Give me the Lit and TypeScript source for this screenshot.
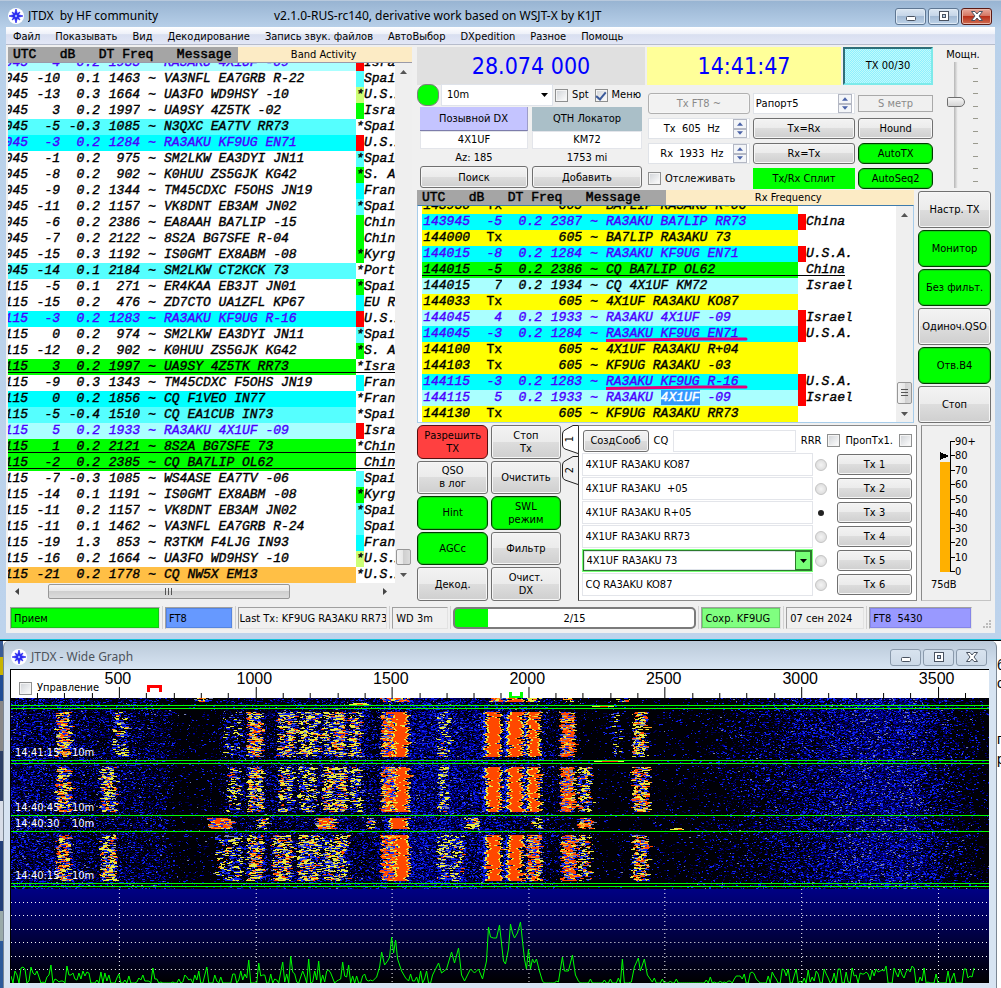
import { LitElement, html, svg, css } from "lit";
import { customElement } from "lit/decorators.js";
import { classMap } from "lit/directives/class-map.js";
import { styleMap } from "lit/directives/style-map.js";

/* time, dB, DT, freq, message, row colour, flag colour, star, country */
type Decode = [string, string, string, string, string, string, string, string, string];

const BAND: Decode[] = [
  ["140045", "4", "0.2", "1933", "RA3AKU 4X1UF -09", "pale mine", "red", "", "Israel"],
  ["140045", "-10", "0.1", "1463", "VA3NFL EA7GRB R-22", "", "sky", "", "Spain"],
  ["140045", "-13", "0.3", "1664", "UA3FO WD9HSY -10", "", "lime", "*", "U.S.A."],
  ["140045", "3", "0.2", "1997", "UA9SY 4Z5TK -02", "", "green", "", "Israel"],
  ["140045", "-5", "-0.3", "1085", "N3QXC EA7TV RR73", "sky", "", "*", "Spain"],
  ["140045", "-3", "0.2", "1284", "RA3AKU KF9UG EN71", "cyan mine", "red", "", "U.S.A."],
  ["140045", "-1", "0.2", "975", "SM2LKW EA3DYI JN11", "", "sky", "*", "Spain"],
  ["140045", "-8", "0.2", "902", "K0HUU ZS5GJK KG42", "", "green", "*", "S. Africa"],
  ["140045", "-9", "0.2", "1344", "TM45CDXC F5OHS JN19", "", "cyan", "", "France"],
  ["140045", "-11", "0.2", "1157", "VK8DNT EB3AM JN02", "", "sky", "*", "Spain"],
  ["140045", "-6", "0.2", "2386", "EA8AAH BA7LIP -15", "", "green", "", "China"],
  ["140045", "-7", "0.2", "2122", "8S2A BG7SFE R-04", "", "green", "", "China"],
  ["140045", "-15", "0.3", "1192", "IS0GMT EX8ABM -08", "", "green", "*", "Kyrgyz"],
  ["140045", "-14", "0.1", "2184", "SM2LKW CT2KCK 73", "sky", "", "*", "Portugal"],
  ["144115", "-5", "0.1", "271", "ER4KAA EB3JT JN01", "", "green", "*", "Spain"],
  ["144115", "-15", "0.2", "476", "ZD7CTO UA1ZFL KP67", "", "cyan", "", "EU Russia"],
  ["144115", "-3", "0.2", "1283", "RA3AKU KF9UG R-16", "cyan mine", "red", "", "U.S.A."],
  ["144115", "0", "0.2", "974", "SM2LKW EA3DYI JN11", "", "sky", "*", "Spain"],
  ["144115", "-12", "0.2", "902", "K0HUU ZS5GJK KG42", "", "green", "*", "S. Africa"],
  ["144115", "3", "0.2", "1997", "UA9SY 4Z5TK RR73", "green under", "", "*", "Israel"],
  ["144115", "-9", "0.3", "1343", "TM45CDXC F5OHS JN19", "", "cyan", "", "France"],
  ["144115", "0", "0.2", "1856", "CQ F1VEO IN77", "cyan", "", "*", "France"],
  ["144115", "-5", "-0.4", "1510", "CQ EA1CUB IN73", "sky", "", "*", "Spain"],
  ["144115", "5", "0.2", "1933", "RA3AKU 4X1UF -09", "pale mine", "red", "", "Israel"],
  ["144115", "1", "0.2", "2121", "8S2A BG7SFE 73", "green under", "", "*", "China"],
  ["144115", "-2", "0.2", "2385", "CQ BA7LIP OL62", "green under", "", "", "China"],
  ["144115", "-7", "-0.3", "1085", "WS4ASE EA7TV -06", "", "sky", "", "Spain"],
  ["144115", "-14", "0.1", "1191", "IS0GMT EX8ABM -08", "", "green", "*", "Kyrgyz"],
  ["144115", "-11", "0.2", "1157", "VK8DNT EB3AM JN02", "", "sky", "*", "Spain"],
  ["144115", "-11", "0.1", "1462", "VA3NFL EA7GRB R-24", "", "sky", "", "Spain"],
  ["144115", "-19", "1.3", "853", "R3TKM F4LJG IN93", "", "cyan", "", "France"],
  ["144115", "-16", "0.2", "1664", "UA3FO WD9HSY -10", "", "lime", "*", "U.S.A."],
  ["144115", "-21", "0.2", "1778", "CQ NW5X EM13", "orange", "", "*", "U.S.A."],
];

const RX: Decode[] = [
  ["143930", "Tx", "", "605", "BA7LIP RA3AKU R-06", "yellow", "", "", ""],
  ["143945", "-5", "0.2", "2387", "RA3AKU BA7LIP RR73", "cyan mine", "red", "", "China"],
  ["144000", "Tx", "", "605", "BA7LIP RA3AKU 73", "yellow", "", "", ""],
  ["144015", "-8", "0.2", "1284", "RA3AKU KF9UG EN71", "cyan mine", "red", "", "U.S.A."],
  ["144015", "-5", "0.2", "2386", "CQ BA7LIP OL62", "green under", "", "", "China"],
  ["144015", "7", "0.2", "1934", "CQ 4X1UF KM72", "pale", "", "", "Israel"],
  ["144033", "Tx", "", "605", "4X1UF RA3AKU KO87", "yellow", "", "", ""],
  ["144045", "4", "0.2", "1933", "RA3AKU 4X1UF -09", "pale mine", "red", "", "Israel"],
  ["144045", "-3", "0.2", "1284", "RA3AKU KF9UG EN71", "cyan mine mark", "red", "", "U.S.A."],
  ["144100", "Tx", "", "605", "4X1UF RA3AKU R+04", "yellow", "", "", ""],
  ["144103", "Tx", "", "605", "KF9UG RA3AKU -03", "yellow", "", "", ""],
  ["144115", "-3", "0.2", "1283", "RA3AKU KF9UG R-16", "cyan mine mark", "red", "", "U.S.A."],
  ["144115", "5", "0.2", "1933", "RA3AKU [4X1UF] -09", "pale mine", "red", "", "Israel"],
  ["144130", "Tx", "", "605", "KF9UG RA3AKU RR73", "yellow", "", "", ""],
];

const W = 979;
const WF_H = 191;
const SP_H = 94;
const hzToX = (hz: number) => 109 + (hz - 500) * 0.2732;

function makeRandom(seed: number) {
  let s = seed;
  return () => {
    s = (s + 0x6d2b79f5) | 0;
    let t = Math.imul(s ^ (s >>> 15), 1 | s);
    t = (t + Math.imul(t ^ (t >>> 7), 61 | t)) ^ t;
    return ((t ^ (t >>> 14)) >>> 0) / 4294967296;
  };
}

/* signal traces: left, right, strength */
type Sig = [number, number, number];
const SEGMENTS: { top: number; bottom: number; signals: Sig[] }[] = [
  { top: 0, bottom: 4, signals: [[185, 200, 0.5], [370, 400, 0.8], [478, 493, 0.8], [497, 514, 0.9], [516, 531, 0.6], [551, 564, 0.5], [605, 620, 0.4]] },
  { top: 14, bottom: 59, signals: [[46, 60, 0.66], [102, 117, 0.26], [213, 231, 0.12], [237, 252, 0.66], [268, 285, 0.56], [288, 310, 0.42], [312, 322, 0.35], [322, 335, 0.62], [338, 350, 0.48], [371, 384, 0.82], [382, 398, 0.93], [427, 439, 0.32], [475, 492, 0.95], [498, 514, 1], [517, 531, 0.87], [551, 565, 0.83], [601, 612, 0.14], [623, 637, 0.6]] },
  { top: 69, bottom: 114, signals: [[46, 60, 0.66], [90, 105, 0.56], [218, 230, 0.35], [237, 252, 0.6], [268, 282, 0.46], [288, 306, 0.36], [312, 336, 0.52], [340, 351, 0.38], [371, 386, 0.78], [384, 399, 1], [427, 438, 0.36], [475, 492, 0.94], [498, 514, 1], [517, 531, 0.87], [551, 565, 0.83], [568, 582, 0.46], [623, 639, 0.68]] },
  { top: 120, bottom: 131, signals: [[198, 221, 0.85], [246, 258, 0.5], [306, 325, 0.8], [356, 364, 0.4], [379, 398, 0.95], [455, 468, 0.52], [522, 533, 0.3], [569, 583, 0.8]] },
  { top: 137, bottom: 183, signals: [[46, 60, 0.62], [90, 105, 0.52], [205, 231, 0.26], [237, 252, 0.56], [262, 282, 0.52], [288, 310, 0.48], [312, 337, 0.42], [371, 386, 0.82], [384, 399, 1], [427, 453, 0.32], [475, 492, 0.91], [498, 514, 0.98], [517, 531, 0.76], [552, 567, 0.8], [568, 581, 0.46], [623, 638, 0.62]] },
];

const NOISE: [number, number][] = [
  [0, 0.4], [60, 0.36], [80, 0.28], [150, 0.26], [165, 0.06], [205, 0.06], [215, 0.2], [280, 0.28], [360, 0.32],
  [410, 0.52], [470, 0.44], [520, 0.28], [560, 0.12], [580, 0.04], [680, 0.06], [740, 0.18], [800, 0.38], [850, 0.56],
  [900, 0.56], [920, 0.36], [950, 0.16], [979, 0.04],
];
const noiseAt = (x: number) => {
  for (let i = 1; i < NOISE.length; i++) {
    const [x1, v1] = NOISE[i];
    if (x <= x1) {
      const [x0, v0] = NOISE[i - 1];
      return v0 + ((v1 - v0) * (x - x0)) / (x1 - x0);
    }
  }
  return 0;
};

const SHADES = ["#000050", "#0000a8", "#1024f0", "#7880b0", "#e8e840", "#ffa020", "#ff4800"];

function buildWaterfall(): string[] {
  const rnd = makeRandom(1441);
  const paths = SHADES.map(() => "");
  const dot = (c: number, x: number, y: number, w: number) => {
    if (w > 0) paths[c] += `M${x} ${y}h${w}v1h-${w}z`;
  };
  for (let y = 0; y < WF_H; y++) {
    for (let x = 0; x < W; ) {
      const w = rnd() < 0.55 ? 1 : 2;
      const d = noiseAt(x);
      const r = rnd();
      if (r < d) {
        const q = rnd();
        const bright = x > 820 && x < 915 ? 0.92 : 0.98;
        dot(q < 0.25 ? 0 : q < 0.58 ? 1 : q < bright ? 2 : 3, x, y, w);
      } else if (r < d * 1.5) dot(0, x, y, w);
      x += w;
    }
  }
  for (const seg of SEGMENTS) {
    for (const [a, b, s] of seg.signals) {
      for (let y = seg.top; y < seg.bottom; y++) {
        const shift = Math.round(Math.sin(y * 0.9 + a) * 1.5 + (rnd() - 0.5) * 3);
        const l = a + shift;
        const r = b + shift - Math.round(rnd() * 2);
        if (s > 0.86) {
          const bite = Math.floor(rnd() * rnd() * (14 - s * 8));
          const biteR = Math.floor(rnd() * rnd() * (16 - s * 9));
          dot(2, l - 3, y, 2);
          dot(4, l - 1 + bite, y, 2);
          dot(6, l + 1 + bite, y, r - l - 2 - bite - biteR);
          dot(rnd() < 0.6 ? 4 : 5, r - 1 - biteR, y, 2);
          if (rnd() < (1 - s) * 6) dot(4, l + Math.floor(rnd() * (r - l - 3)), y, 4);
          continue;
        }
        for (let x = l; x < r; ) {
          const w = 1 + Math.floor(rnd() * 4);
          const v = rnd();
          if (v < s * 0.95) {
            const hot = rnd();
            const k = s * s;
            dot(hot < k * 0.8 ? 6 : hot < k ? 5 : hot < 0.86 ? 4 : 3, x, y, w);
          } else if (v < s + 0.15) dot(2, x, y, w);
          x += w;
        }
      }
    }
  }
  /* carriers that drift between the time slots */
  for (const [x, y, w] of [[586, 8, 16], [588, 63, 24], [664, 131, 8], [342, 6, 14]]) {
    dot(4, x, y - 1, w);
    dot(4, x - 4, y, w + 6);
    dot(6, x + 4, y, Math.max(4, w - 8));
  }
  return paths;
}

/* spectrum peaks: x, height above the floor */
const PEAKS: [number, number][] = [
  [56, 17], [142, 15], [196, 16], [238, 23], [248, 20], [272, 21], [280, 27], [298, 24], [308, 22], [332, 21], [338, 18],
  [427, 21], [571, 17], [612, 24], [778, 14], [842, 15], [876, 17], [902, 17],
];
const SHAPE: [number, number][] = [
  [362, 2], [366, 6], [369, 16], [371, 31], [374, 18], [377, 22], [379, 26], [381, 46], [383, 30], [385, 43], [387, 24],
  [391, 12], [395, 5], [398, 2], [414, 4], [422, 8], [428, 20], [431, 10], [436, 14], [441, 31], [444, 20], [448, 35],
  [451, 8], [454, 2], [460, 14], [464, 10], [468, 14], [472, 4], [476, 22], [478, 56], [480, 46], [483, 45], [486, 45],
  [489, 58], [491, 40], [493, 22], [495, 19], [498, 34], [500, 59], [502, 50], [504, 45], [507, 50], [510, 61],
  [512, 42], [514, 24], [516, 14], [518, 34], [520, 14], [522, 24], [524, 20], [526, 24], [529, 12], [532, 2],
  [548, 1], [550, 14], [552, 26], [554, 12], [558, 12], [562, 28], [565, 8], [568, 2], [621, 1], [624, 16], [628, 25],
  [630, 12], [634, 24], [637, 8], [642, 1],
];

function buildSpectrum(): string {
  const rnd = makeRandom(77);
  const pts: string[] = [];
  let si = 0;
  for (let x = 0; x < W - 14; x += 2) {
    const inShape = si < SHAPE.length && x >= SHAPE[si][0] - 1;
    if (inShape) {
      while (si < SHAPE.length && SHAPE[si][0] <= x + 1) {
        pts.push(`${SHAPE[si][0]},${SP_H - SHAPE[si][1]}`);
        si++;
      }
      continue;
    }
    const prev = si > 0 && si < SHAPE.length ? SHAPE[si][0] - SHAPE[si - 1][0] < 7 : false;
    if (prev) continue;
    const floor = x < 80 ? 8 : x < 205 ? 2 : x < 480 ? 3 : x < 700 ? -4 : x < 760 ? 1 : 5;
    let h = floor + (rnd() - 0.5) * (x > 480 && x < 700 ? 18 : 20);
    for (const [px, ph] of PEAKS) if (Math.abs(px - x) < 1) h = ph;
    pts.push(`${x},${SP_H - Math.max(0, Math.round(h))}`);
  }
  return pts.join(" ");
}

const WATERFALL = buildWaterfall();
const SPECTRUM = buildSpectrum();

const logo = html`<svg class="logo" viewBox="0 0 16 16" aria-hidden="true">
  <circle cx="8" cy="8" r="8" fill="#fff" />
  <path d="M8 1 9.300 5.500 12 4 10.500 6.700 15 8 10.500 9.300 12 12 9.300 10.500 8 15 6.700 10.500 4 12 5.500 9.300 1 8 5.500 6.700 4 4 6.700 5.500z" fill="#2a2af0" stroke="#2a2af0" stroke-width="0.700" />
  <circle cx="8" cy="8" r="1.200" fill="#9db4ff" />
</svg>`;

const arrow = (dir: string) => {
  const d: Record<string, string> = {
    up: "M0 4 3.500 0 7 4z", down: "M0 0 3.500 4 7 0z", left: "M4 0 0 3.500 4 7z", right: "M0 0 4 3.500 0 7z",
  };
  const wide = dir === "up" || dir === "down";
  return html`<svg width=${wide ? 7 : 4} height=${wide ? 4 : 7} viewBox=${wide ? "0 0 7 4" : "0 0 4 7"} aria-hidden="true"><path d=${d[dir]} fill="currentColor" /></svg>`;
};

const windowButtons = html`<div class="winbtns">
  <button aria-label="Свернуть"><svg width="12" height="12"><rect x="1.500" y="6.500" width="9" height="4" rx="1" fill="#fff" stroke="#4a5361" /></svg></button>
  <button aria-label="Развернуть"><svg width="12" height="12"><rect x="1.500" y="1.500" width="9" height="9" fill="#fff" stroke="#4a5361" /><rect x="4.500" y="4.500" width="3" height="3" fill="#b9cfe6" stroke="#4a5361" /></svg></button>
  <button class="close" aria-label="Закрыть"><svg width="14" height="12"><path d="M1.500 1.500h3.500l2 2.500 2-2.500h3.500L9 6l3.500 4.500H9L7 8l-2 2.500H1.500L5 6z" fill="#fff" stroke="#4a5361" /></svg></button>
</div>`;

const sharedText = css`
  * { box-sizing: border-box; }
  button, input, select { font: inherit; color: inherit; margin: 0; }
`;

@customElement("decode-list")
class DecodeList extends LitElement {
  static properties = {
    rows: { attribute: false },
    cut: { type: Boolean },
  };
  declare rows: Decode[];
  declare cut: boolean;

  static styles = [sharedText, css`
    :host { display: flex; flex-direction: column; justify-content: flex-end; overflow: hidden; background: #fff; min-width: 0; }
    table { border-collapse: collapse; table-layout: fixed; width: 100%; font: italic 13px/16px "Liberation Mono", monospace; color: #000; -webkit-text-stroke: 0.4px currentColor; }
    tr { height: 16px; }
    td { padding: 0; height: 16px; white-space: pre; text-align: right; overflow: hidden; }
    .time { width: 48px; }
    .cut .time { width: 20px; }
    .time div { display: flex; justify-content: flex-end; }
    .db { width: 32px; }
    .dt, .freq { width: 40px; }
    .tilde { width: 24px; text-align: center; }
    .msg { width: 192px; text-align: left; position: relative; overflow: visible; }
    .flag { width: 8px; text-align: center; }
    .country { text-align: left; }
    .tx .db { font-style: normal; }
    .mine td:not(.flag):not(.country) { color: #4b00ff; }
    .pale td { background-color: #aaffff; }
    .sky td { background-color: #55ffff; }
    .cyan td { background-color: #00ffff; }
    .green td { background-color: #00ff00; }
    .yellow td { background-color: #ffff00; }
    .orange td { background-color: #ffbf45; }
    tr td.flag, tr td.country { background-color: #fff; }
    tr td.f-red { background-color: #ff0000; }
    tr td.f-sky { background-color: #55ffff; }
    tr td.f-cyan { background-color: #00ffff; }
    tr td.f-green { background-color: #00ff00; }
    tr td.f-lime { background-color: #ccff77; }
    .under td { background-image: linear-gradient(#000, #000); background-size: 100% 1px; background-position: 0 13px; background-repeat: no-repeat; }
    .under .country { background-image: none; }
    .under .country span { display: inline-block; height: 16px; vertical-align: top; background: linear-gradient(#000, #000) 0 13px / 100% 1px no-repeat; }
    .sel { background: #3399ff; color: #fff; }
    .pen { position: absolute; left: 0; bottom: 0; }
  `];

  render() {
    return html`<table class=${classMap({ cut: this.cut })}><tbody>
      ${this.rows.map((r) => {
        const parts = r[4].split(/[\[\]]/);
        const cls = r[5] + (r[1] === "Tx" ? " tx" : "");
        return html`<tr class=${cls}>
          <td class="time"><div>${this.cut ? r[0].slice(3) : r[0]}</div></td><td class="db">${r[1]}</td><td class="dt">${r[2]}</td><td class="freq">${r[3]}</td><td class="tilde">~</td>
          <td class="msg">${parts.length > 1 ? html`${parts[0]}<span class="sel">${parts[1]}</span>${parts[2]}` : r[4]}${r[5].includes("mark")
            ? html`<svg class="pen" width="146" height="5" aria-hidden="true"><path d="M0 3.500 90 2 140 2" stroke="#e6007a" stroke-width="3" fill="none" stroke-linecap="round" /></svg>` : ""}</td>
          <td class=${"flag " + (r[6] ? "f-" + r[6] : "")}>${r[7]}</td><td class="country"><span>${r[8]}</span></td>
        </tr>`;
      })}
    </tbody></table>`;
  }
}

@customElement("wide-graph")
class WideGraph extends LitElement {
  static styles = [sharedText, css`
    :host { display: flex; flex-direction: column; border-top: 1px solid #000; border-left: 1px solid #000; background: #000; position: relative; }
    .scale { position: relative; height: 28px; background: #fff; overflow: hidden; }
    .scale svg, .plot svg { display: block; width: 100%; }
    .hz { position: absolute; top: 0; width: 60px; margin-left: -30px; text-align: center; font: 16px/18px "Liberation Sans", sans-serif; color: #000; }
    .ctl { position: absolute; left: 8px; top: 11px; display: flex; align-items: center; gap: 5px; font: 11px/14px "DejaVu Sans Condensed", "Noto Sans", sans-serif; color: #000; }
    .ctl input { appearance: none; width: 13px; height: 13px; margin: 0; border: 1px solid #8e8f8f; background: linear-gradient(135deg, #cfd2d6, #fff); box-shadow: inset 0 0 0 1px #f4f4f4; }
    .plot { position: relative; }
    .stamp { position: absolute; left: 4px; font: 11px/12px "DejaVu Sans Condensed", "Noto Sans", sans-serif; color: #fff; white-space: pre; }
  `];

  render() {
    const ticks: number[] = [];
    for (let f = 200; f <= 3600; f += 100) ticks.push(f);
    const majors = [500, 1000, 1500, 2000, 2500, 3000, 3500];
    const stamps: [string, number][] = [["14:41:15", 49], ["14:40:45", 104], ["14:40:30", 120], ["14:40:15", 172]];
    return html`
      <div class="scale">
        <svg viewBox="0 0 979 28" height="28" preserveAspectRatio="none" shape-rendering="crispEdges">
          ${ticks.map((f) => svg`<path d="M${Math.round(hzToX(f)) - 1}.5 ${f % 500 ? 23 : 17}V28" stroke="#000" />`)}
          <path d="M137.500 22V16.500H149.500V22" stroke="#f00" stroke-width="3" fill="none" />
          <path d="M500.500 22V27H511.500V22" stroke="#0f0" stroke-width="3" fill="none" />
        </svg>
        ${majors.map((f) => html`<span class="hz" style=${styleMap({ left: ((hzToX(f) - 2) / W) * 100 + "%" })}>${f}</span>`)}
        <label class="ctl"><input type="checkbox" />Управление</label>
      </div>
      <div class="plot">
        <svg viewBox="0 0 979 191" height="191" preserveAspectRatio="none" shape-rendering="crispEdges">
          <rect width="979" height="191" fill="#000006" />
          ${WATERFALL.map((d, i) => svg`<path d=${d} fill=${SHADES[i]} />`)}
          <path d="M0 7.500H979M0 10.500H979M0 62.500H979M0 65.500H979M0 117.500H979M0 133.500H979M0 185.500H979M0 188.500H979" stroke="#00ff00" />
        </svg>
        ${stamps.map(([t, y]) => html`<span class="stamp" style=${styleMap({ top: y + "px" })}>${t}    10m</span>`)}
      </div>
      <div class="plot">
        <svg viewBox="0 0 979 94" height="94" preserveAspectRatio="none">
          <defs><linearGradient id="deep" x1="0" y1="0" x2="0" y2="1"><stop offset="0" stop-color="#000084" /><stop offset="1" stop-color="#000" /></linearGradient></defs>
          <rect width="979" height="94" fill="url(#deep)" />
          <g stroke="#fff" stroke-dasharray="1 3" shape-rendering="crispEdges">
            ${[13, 26, 40, 53, 67, 80].map((y) => svg`<path d="M0 ${y}.5H979" />`)}
            ${majors.map((f) => svg`<path d="M${Math.round(hzToX(f)) - 1}.5 0V94" />`)}
          </g>
          <polyline points=${SPECTRUM} fill="none" stroke="#00ff00" shape-rendering="crispEdges" />
        </svg>
      </div>`;
  }
}

@customElement("app-root")
class AppRoot extends LitElement {
  static styles = [sharedText, css`
    :host { display: flex; flex-direction: column; min-height: 100vh; font: 11px/14px "DejaVu Sans Condensed", "Noto Sans", sans-serif; color: #000; background: #fff; }
    .window { background: linear-gradient(#98b4d2, #b9d1ea 28px, #bdd3ec); padding: 0 6px 6px; border-bottom: 1px solid #19c3dc; border-top: 1px solid #b8c9dd; }
    .title { display: flex; align-items: center; height: 26px; font: 12px/16px "Noto Sans", sans-serif; padding: 4px 3px 0 2px; white-space: pre; }
    .logo { width: 16px; height: 16px; flex: none; margin-right: 4px; }
    .name { width: 25%; min-width: 0; overflow: hidden; flex: none; }
    .winbtns { margin-left: auto; display: flex; gap: 2px; }
    .winbtns button { width: 31px; height: 17px; padding: 0; display: grid; place-items: center; border: 1px solid #5f7793; border-radius: 3px; background: linear-gradient(#dbe6f2, #c3d4e7 50%, #a3bad4 50%, #bdd2e8); box-shadow: inset 0 0 0 1px #dfeaf5; }
    .winbtns .close { border-color: #5b1a14; background: linear-gradient(#e8a99c, #d3705c 50%, #b9301a 50%, #cf6d52); box-shadow: inset 0 0 0 1px #eab6a8; }
    .client { background: #f0f0f0; }
    .menu { display: flex; gap: 15px; height: 18px; padding: 2px 7px 0; align-items: center; background: linear-gradient(#fff, #eef1f9 40%, #d9dff0 45%, #e2e7f6); border-bottom: 1px solid #b6bccc; }
    .menu button { border: 0; padding: 0; background: none; white-space: nowrap; }
    .body { display: grid; grid-template-columns: minmax(0, 404fr) minmax(0, 574fr); gap: 5px; padding: 2px 4px 0 2px; }

    .caption { display: flex; height: 15px; background: #fcebc5; }
    .caption .cols { background: #a5a5a5; font: 13px/15px "Liberation Mono", monospace; -webkit-text-stroke: 0.5px currentColor; white-space: pre; overflow: hidden; }
    .caption .what { flex: 1; text-align: center; line-height: 16px; padding-right: 3px; }
    .cols.a { flex: 0 0 57%; padding-left: 5px; }
    .cols.b { flex: 0 0 50%; padding-left: 5px; }

    .listrow { display: flex; border-top: 1px solid #9a9aa8; }
    .listrow decode-list { flex: 1; }
    .band decode-list { height: 520px; }
    .rx .listrow { border: 1px solid #a8cdea; border-top-color: #3d7bad; padding-left: 4px; background: #fff; }
    .rx decode-list { height: 216px; }
    .vbar { width: 17px; flex: none; background: #efefef; display: flex; flex-direction: column; align-items: center; color: #555; padding: 7px 1px 6px; }
    .vbar i, .hbar i { display: grid; place-items: center; border: 1px solid #979797; border-radius: 2px; background: linear-gradient(90deg, #f4f4f4, #e6e6e6 50%, #cfcfcf 50%, #dcdcdc); }
    .vbar i { width: 15px; height: 16px; margin-top: auto; margin-bottom: 8px; }
    .rx .vbar i { height: 22px; margin-bottom: 8px; }
    .hbar { display: flex; align-items: center; height: 17px; background: #efefef; padding: 0 25px 0 7px; color: #444; }
    .hbar i { height: 15px; flex: 0 0 65%; margin: 0 auto 0 29px; background: linear-gradient(#f4f4f4, #e6e6e6 50%, #cfcfcf 50%, #dcdcdc); }

    .right { display: flex; flex-direction: column; min-width: 0; }
    .top { display: flex; gap: 2px; }
    .topmain { flex: 1; min-width: 0; }
    .displays { display: grid; grid-template-columns: 228fr 194fr 90fr; gap: 2px; height: 36px; }
    .big { font-size: 23px; line-height: 38px; color: #0000ff; text-align: center; }
    .freq { background: #e0e0e0; }
    .clock { background: #ffff99; }
    .txp { border: 2px solid #7deaea; border-top-color: #2f6f78; border-left-color: #2f6f78; background: #aaf6fa repeating-conic-gradient(#8defff 0 25%, #c2fafa 0 50%) 0 0 / 2px 2px; text-align: center; line-height: 34px; }
    .ctlrow { display: grid; grid-template-columns: 228fr 285fr; gap: 3px; }
    .dx { display: grid; grid-template-columns: 108fr 110fr; column-gap: 4px; grid-template-rows: 24px 24px 18px 17px 22px; padding: 0 3px; }
    .bandrow { grid-column: 1 / 3; display: flex; align-items: center; gap: 2px; height: 22px; margin: 1px -3px 0; }
    .lamp { width: 22px; height: 22px; border-radius: 9px; background: #00ff00; border: 1px solid #808080; flex: none; }
    .drop { position: relative; display: flex; flex: 1; min-width: 0; }
    .bandrow .drop { height: 22px; }
    .drop svg { position: absolute; right: 5px; top: 50%; margin-top: -2px; pointer-events: none; }
    select { appearance: none; width: 100%; border: 1px solid #dfe3ea; border-radius: 0; background: #fff; padding: 0 0 0 5px; }
    .bandrow label { display: flex; align-items: center; gap: 4px; margin-right: 4px; white-space: nowrap; }
    input[type="checkbox"] { appearance: none; flex: none; width: 13px; height: 13px; border: 1px solid #8e8f8f; background: linear-gradient(135deg, #cfd2d6, #fff); box-shadow: inset 0 0 0 1px #f4f4f4; display: grid; place-items: center; }
    input[type="checkbox"]:checked::after { content: ""; width: 4px; height: 8px; border: solid #3b5a9b; border-width: 0 2px 2px 0; transform: rotate(40deg); }
    .hd { border: 0; padding: 0; text-align: center; }
    .call { background: #c4c4ff; border-bottom: 1px solid #7d7dab; border-right: 1px solid #9d9dc8; }
    .loc { background: #aabfc8; }
    .field { border: 1px solid #e3e5ea; background: #fff; width: 100%; min-width: 0; padding: 0 3px; }
    .mid { text-align: center; }
    .info { text-align: center; line-height: 17px; }
    .btn { border: 1px solid #707070; border-radius: 3px; background: linear-gradient(#f3f3f3, #ebebeb 50%, #dddddd 50%, #cfcfcf); box-shadow: inset 0 0 0 1px #f6f6f6; padding: 0; text-align: center; min-width: 0; line-height: 13px; }
    .btn.on { background: #00ff00; border-color: #003a00; border-radius: 6px; box-shadow: inset 0 0 0 1px #10d010; }
    .btn.stop { background: #ff4040; border-color: #551010; border-radius: 6px; box-shadow: none; }
    .btn.split { background: #00ff00; border: 0; border-radius: 0; box-shadow: none; }
    .btn:disabled { color: #8a8a8a; border-color: #b0b0b0; background: #f2f2f2; }
    .grid { display: grid; grid-template-columns: 102fr 103fr 75fr; grid-auto-rows: 21px; gap: 4px 3px; padding-top: 10px; }
    .spin { display: flex; background: #fff; border: 1px solid #e0e3e8; padding: 1px 2px; min-width: 0; }
    .spin input { border: 0; background: none; width: 100%; min-width: 0; padding: 0; }
    .spin .mid { text-align: center; }
    .steps { display: flex; flex-direction: column; flex: none; width: 14px; margin: -1px 0; }
    .steps button { flex: 1; min-height: 0; border: 1px solid #b4b8c4; background: #f3f5f8; padding: 0; display: grid; place-items: center; color: #4a62a8; }
    .steps svg { width: 6px; height: 4px; }
    .smeter { border: 1px solid #a9a9a9; color: #8a8a8a; text-align: center; margin: 2px 0; line-height: 15px; }
    .track { display: flex; align-items: center; gap: 4px; white-space: nowrap; }
    .power { flex: 0 0 56px; display: flex; flex-direction: column; align-items: center; line-height: 15px; }
    .pslide { display: flex; gap: 8px; flex: 1; padding-right: 2px; }
    .pslide input { appearance: none; writing-mode: vertical-lr; direction: rtl; width: 18px; height: 126px; background: linear-gradient(90deg, #b5b5b5, #f4f4f4) center / 4px 100% no-repeat; margin: 0; }
    .pslide input::-webkit-slider-thumb { appearance: none; width: 18px; height: 10px; background: linear-gradient(#f6f6f6, #d4d4d4); border: 1px solid #6e6e6e; border-radius: 2px 6px 6px 2px; }
    .ticks { display: flex; flex-direction: column; justify-content: space-between; padding: 6px 0; height: 126px; }
    .ticks span { width: 5px; height: 1px; background: #9a9a8e; }

    .middle { display: flex; gap: 4px; margin-top: 1px; }
    .rx { flex: 1; min-width: 0; }
    .side { flex: 0 0 73px; display: grid; grid-auto-rows: 1fr; gap: 2px; padding-top: 1px; }
    .side .btn { line-height: 16px; }

    .bottom { display: flex; margin-top: 2px; height: 176px; }
    .acts { display: grid; grid-template-columns: 71fr 69fr; grid-auto-rows: 1fr; gap: 2px 3px; flex: 0 0 25%; }
    .tabs { display: flex; flex-direction: column; gap: 2px; width: 16px; flex: none; margin-left: 1px; }
    .tabs button { border: 0; padding: 0; width: 16px; height: 29px; background: none; display: grid; place-items: center; position: relative; }
    .tabs svg { position: absolute; inset: 0; z-index: 0; }
    .tabs span { position: relative; writing-mode: vertical-rl; transform: rotate(180deg); line-height: 14px; }
    .panel { flex: 1; min-width: 0; background: #fff; border: 1px solid #888; border-left-color: #333; padding: 3px 4px 2px 3px; display: flex; flex-direction: column; gap: 1px; }
    .gen { display: flex; align-items: center; gap: 5px; height: 23px; padding-left: 1px; }
    .gen .btn { width: 66px; height: 22px; flex: none; }
    .gen label { display: flex; align-items: center; gap: 6px; white-space: nowrap; }
    .gen .field { flex: 1; height: 22px; }
    .gen .cq { flex: 1; gap: 5px; min-width: 0; }
    .tx { display: grid; grid-template-columns: minmax(0, 1fr) 16px 83px; align-items: center; height: 23px; }
    .tx .btn { height: 21px; margin-left: 8px; }
    .tx .field { height: 23px; }
    .tx input[type="radio"] { appearance: none; width: 12px; height: 12px; border-radius: 50%; border: 1px solid #c4c4c4; background: radial-gradient(#f4f4f4, #d6d6d6); justify-self: center; }
    .tx input[type="radio"]:checked { border: 3px solid #fff; background: #222; }
    .tx .drop { border: 2px solid #77ff77; height: 23px; outline: 1px solid #2c7a2c; outline-offset: -2px; }
    .tx select { padding-left: 2px; }
    .drop em { position: absolute; right: 0; top: 0; bottom: 0; width: 16px; background: #77ff77; border: 1px solid #2c7a2c; pointer-events: none; }
    .tx .drop svg { right: 4px; }
    .meter { flex: 0 0 70px; margin-left: 4px; border: 1px solid #c4c4c4; border-left-color: #8a8a8a; border-top-color: #a4a4a4; padding: 8px 0 0 9px; }
    .meter svg { display: block; }
    .meter text { font: 11px "DejaVu Sans Condensed", "Noto Sans", sans-serif; }
    .meter p { margin: 0; }

    .status { display: flex; align-items: center; gap: 6px; padding: 5px 4px 4px 4px; }
    .status > div { height: 22px; line-height: 22px; padding: 0 3px; white-space: pre; overflow: hidden; border: 1px solid #a0a0a0; border-right-color: #e2e2e2; border-bottom-color: #e2e2e2; min-width: 0; }
    .status .s3 { padding: 0 1px; }
    .status .sep { height: 23px; width: 1px; padding: 0; border: 0; background: #d2d2d2; flex: none; margin: 0 -4px; }
    .s1 { flex: 150 1 0; background: #00ff00; box-shadow: inset 0 0 0 1px #15c415; }
    .s2 { flex: 63 1 0; background: #6699ff; box-shadow: inset 0 0 0 1px #5585e0; }
    .s3 { flex: 154 1 0; }
    .s4 { flex: 50 1 0; }
    .status .s5 { flex: 247 1 0; border: 2px solid #7b7b7b; border-radius: 5px; background: linear-gradient(#00ff00, #00ff00) 0 0 / 14% 100% no-repeat #fff; text-align: center; line-height: 20px; }
    .s6 { flex: 76 1 0; background: #80ff80; box-shadow: inset 0 0 0 1px #66d466; }
    .s7 { flex: 74 1 0; }
    .s8 { flex: 100 1 0; background: #9999ff; box-shadow: inset 0 0 0 1px #8585e8; }
    .grip { flex: none; align-self: flex-end; margin-left: 4px; }

    .desk { display: flex; flex: 1; border-top: 1px solid #000; background: #fff; }
    .behind-l { width: 3px; flex: none; background: linear-gradient(#3a5c95 0 16px, #c8b400 16px 34px, #1f4e96 34px 60px, #888 60px 110px, #2c3f66 110px 160px, #d8dee8 160px 200px, #23407a 200px 270px, #9aa 270px 300px, #2d5a9a 300px); }
    .behind-r { width: 4px; flex: none; overflow: hidden; font: 14px/18px "Liberation Sans", sans-serif; padding-top: 15px; display: flex; flex-direction: column; }
    .behind-r span + span + span { margin-top: 38px; }
    .behind-r span + span + span + span { margin-top: 2px; }
    .graph { flex: 1; min-width: 0; border: 1px solid #7b8794; border-width: 0 1px 0 1px; border-radius: 6px 6px 0 0; background: linear-gradient(#bac9d9, #d7e4f2 28px); padding: 0 7px 5px 6px; }
    .graph .title { height: 28px; padding: 4px 2px 0 1px; color: #4c535b; }
    .graph .winbtns button, .graph .winbtns .close { background: linear-gradient(#d8e3ef, #ccd9e7); border-color: #8a9aac; box-shadow: none; }
  `];

  render() {
    const tx = ["4X1UF RA3AKU KO87", "4X1UF RA3AKU  +05", "4X1UF RA3AKU R+05", "4X1UF RA3AKU RR73", "4X1UF RA3AKU 73", "CQ RA3AKU KO87"];
    const spin = (label: string, value: string, mid = true) => html`<div class="spin"><input class=${mid ? "mid" : ""} aria-label=${label} .value=${value} /><span class="steps"><button aria-label="Больше">${arrow("up")}</button><button aria-label="Меньше">${arrow("down")}</button></span></div>`;
    return html`
      <section class="window">
        <div class="title">${logo}<span class="name">JTDX  by HF community</span><span>v2.1.0-RUS-rc140, derivative work based on WSJT-X by K1JT</span>${windowButtons}</div>
        <div class="client">
          <nav class="menu">${["Файл", "Показывать", "Вид", "Декодирование", "Запись звук. файлов", "АвтоВыбор", "DXpedition", "Разное", "Помощь"].map((m) => html`<button>${m}</button>`)}</nav>
          <div class="body">
            <div class="band">
              <div class="caption"><span class="cols a">UTC   dB   DT Freq   Message</span><span class="what">Band Activity</span></div>
              <div class="listrow"><decode-list cut .rows=${BAND}></decode-list>
                <div class="vbar">${arrow("up")}<i></i>${arrow("down")}</div></div>
              <div class="hbar">${arrow("left")}<i><svg width="8" height="7"><path d="M.5 0V7M3.500 0V7M6.500 0V7" stroke="#555" /></svg></i>${arrow("right")}</div>
            </div>
            <div class="right">
              <div class="top">
                <div class="topmain">
                  <div class="displays"><div class="big freq">28.074 000</div><div class="big clock">14:41:47</div><div class="txp">TX 00/30</div></div>
                  <div class="ctlrow">
                    <div class="dx">
                      <div class="bandrow"><span class="lamp"></span><span class="drop"><select aria-label="Диапазон"><option>10m</option></select>${arrow("down")}</span>
                        <label><input type="checkbox" />Spt</label><label><input type="checkbox" checked />Меню</label></div>
                      <button class="hd call">Позывной DX</button><button class="hd loc">QTH Локатор</button>
                      <input class="field mid" aria-label="Позывной DX" .value=${"4X1UF"} /><input class="field mid" aria-label="QTH Локатор" .value=${"KM72"} />
                      <div class="info">Az: 185</div><div class="info">1753 mi</div>
                      <button class="btn">Поиск</button><button class="btn">Добавить</button>
                    </div>
                    <div class="grid">
                      <button class="btn" disabled>Tx FT8 ~</button>${spin("Рапорт", "Рапорт5", false)}<div class="smeter">S метр</div>
                      ${spin("Tx частота", "Tx  605  Hz")}<button class="btn">Tx=Rx</button><button class="btn">Hound</button>
                      ${spin("Rx частота", "Rx  1933  Hz")}<button class="btn">Rx=Tx</button><button class="btn on">AutoTX</button>
                      <label class="track"><input type="checkbox" />Отслеживать</label><button class="btn split">Tx/Rx Сплит</button><button class="btn on">AutoSeq2</button>
                    </div>
                  </div>
                </div>
                <div class="power"><label for="pwr">Мощн.</label>
                  <div class="pslide"><input id="pwr" type="range" min="0" max="100" .value=${"70"} /><div class="ticks">${Array.from({ length: 10 }, () => html`<span></span>`)}</div></div>
                </div>
              </div>
              <div class="middle">
                <div class="rx">
                  <div class="caption"><span class="cols b">UTC   dB   DT Freq   Message</span><span class="what">Rx Frequency</span></div>
                  <div class="listrow"><decode-list .rows=${RX}></decode-list>
                    <div class="vbar">${arrow("up")}<i><svg width="7" height="8"><path d="M0 .5H7M0 3.500H7M0 6.500H7" stroke="#555" /></svg></i>${arrow("down")}</div></div>
                </div>
                <div class="side"><button class="btn">Настр. TX</button><button class="btn on">Монитор</button><button class="btn on">Без фильт.</button><button class="btn">Одиноч.QSO</button><button class="btn on">Отв.В4</button><button class="btn">Стоп</button></div>
              </div>
              <div class="bottom">
                <div class="acts">
                  <button class="btn stop">Разрешить<br />TX</button><button class="btn">Стоп<br />Tx</button>
                  <button class="btn">QSO<br />в лог</button><button class="btn">Очистить</button>
                  <button class="btn on">Hint</button><button class="btn on">SWL<br />режим</button>
                  <button class="btn on">AGCc</button><button class="btn">Фильтр</button>
                  <button class="btn">Декод.</button><button class="btn">Очист.<br />DX</button>
                </div>
                <div class="tabs">${["1", "2"].map((n) => html`<button><svg width="16" height="29"><path d="M16 .5H11L3 5Q.5 6 .5 9V20Q.5 23 3 24L16 28.500" fill=${n === "1" ? "#fff" : "#f0f0f0"} stroke="#222" /></svg><span>${n}</span></button>`)}</div>
                <div class="panel">
                  <div class="gen"><button class="btn">СоздСооб</button><label class="cq">CQ<input class="field" /></label><label>RRR<input type="checkbox" /></label><label>ПропTx1.<input type="checkbox" /></label></div>
                  ${tx.map((t, i) => html`<div class="tx">
                    ${i === 4 ? html`<span class="drop"><select aria-label="Сообщение 5"><option>${t}</option></select><em></em>${arrow("down")}</span>` : html`<input class="field" aria-label=${"Сообщение " + (i + 1)} .value=${t} />`}
                    <input type="radio" name="tx" aria-label=${"Tx " + (i + 1)} ?checked=${i === 2} /><button class="btn">Tx ${i + 1}</button></div>`)}
                </div>
                <div class="meter">
                  <svg width="58" height="144" shape-rendering="crispEdges">
                    <rect x="9" y="28" width="10" height="110" fill="#ffb000" />
                    <path d="M19.500 7V138" stroke="#000" />
                    <path d="M9 18v8l9-4z" />
                    ${[0, 1, 2, 3, 4, 5, 6, 7, 8, 9].map((n) => {
                      const y = Math.round(137 - n * 14.500);
                      return svg`<path d="M20 ${y}.5H24" stroke="#000" /><text x="24" y=${y + 4}>${n * 10}${n === 9 ? "+" : ""}</text>`;
                    })}
                  </svg><p>75dB</p>
                </div>
              </div>
            </div>
          </div>
          <footer class="status"><div class="s1">Прием</div><div class="sep"></div><div class="s2">FT8</div><div class="sep"></div><div class="s3">Last Tx: KF9UG RA3AKU RR73</div><div class="sep"></div><div class="s4">WD 3m</div><div class="sep"></div><div class="s5" role="progressbar" aria-valuenow="2" aria-valuemax="15">2/15</div><div class="sep"></div><div class="s6">Сохр. KF9UG</div><div class="sep"></div><div class="s7">07 сен 2024</div><div class="sep"></div><div class="s8">FT8  5430</div>
            <svg class="grip" width="9" height="9"><path d="M7 0h2v2H7zM4 3h2v2H4zM7 3h2v2H7zM1 6h2v2H1zM4 6h2v2H4zM7 6h2v2H7z" fill="#bcbcbc" /></svg></footer>
        </div>
      </section>
      <div class="desk">
        <div class="behind-l"></div>
        <section class="graph">
          <div class="title">${logo}<span>JTDX - Wide Graph</span>${windowButtons}</div>
          <wide-graph></wide-graph>
        </section>
        <div class="behind-r"><span>б</span><span>с</span><span>г</span><span>р</span></div>
      </div>`;
  }
}
